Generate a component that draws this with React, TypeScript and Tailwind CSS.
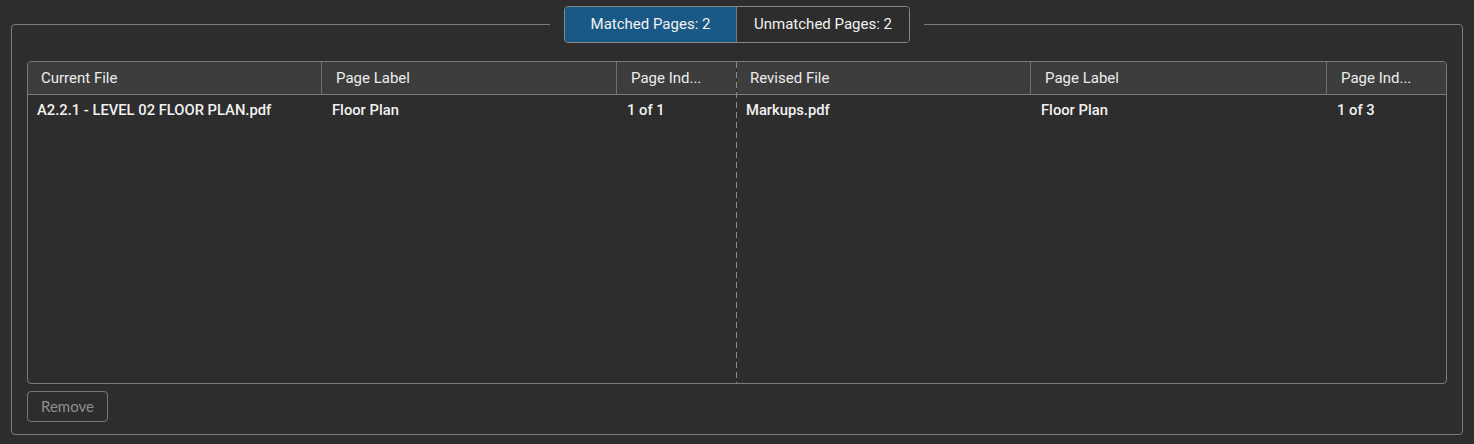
import { useState } from "react";

type Side = {
  cols: { label: string; width: string }[];
  row: string[];
};

const sides: Side[] = [
  {
    cols: [
      { label: "Current File", width: "w-[293px]" },
      { label: "Page Label", width: "w-[295px]" },
      { label: "Page Ind...", width: "flex-1" },
    ],
    row: ["A2.2.1 - LEVEL 02 FLOOR PLAN.pdf", "Floor Plan", "1 of 1"],
  },
  {
    cols: [
      { label: "Revised File", width: "w-[293px]" },
      { label: "Page Label", width: "w-[296px]" },
      { label: "Page Ind...", width: "flex-1" },
    ],
    row: ["Markups.pdf", "Floor Plan", "1 of 3"],
  },
];

function PageTable({ side, width }: { side: Side; width: string }) {
  return (
    <div className={`flex flex-col ${width} min-w-0`}>
      {/* header */}
      <div className="flex h-[33px] bg-[#3d3d3d] border-b border-[#7a7a7a]">
        {side.cols.map((c, i) => (
          <div
            key={i}
            className={`${c.width} shrink-0 flex items-center text-[15px] text-[#ececec] truncate ${
              i > 0 ? "border-l border-[#6f6f6f] pl-[14px]" : "pl-[13px]"
            }`}
          >
            {c.label}
          </div>
        ))}
      </div>
      {/* row */}
      <div className="flex h-[30px] items-center">
        {side.cols.map((c, i) => (
          <div
            key={i}
            className={`${c.width} shrink-0 ${i > 0 ? "pl-[11px]" : "pl-[9px]"} text-[14.75px] font-medium text-[#f2f2f2] truncate`}
          >
            {side.row[i]}
          </div>
        ))}
      </div>
    </div>
  );
}

export default function App() {
  const [tab, setTab] = useState<"matched" | "unmatched">("matched");

  return (
    <div
      className="w-[1474px] h-[444px] bg-[#2d2d2d] px-[11px] pt-[6px] overflow-hidden"
      style={{ fontFamily: "Roboto, 'Liberation Sans', sans-serif" }}
    >
      <fieldset className="border border-[#7c7c7c] rounded-[4px] px-[15px] pt-[18px] pb-[12px] m-0 min-w-0">
        <legend className="mx-auto px-[14px]">
          <div className="flex h-[37px] border border-[#888888] rounded-[4px] overflow-hidden text-[15px]">
            <button
              onClick={() => setTab("matched")}
              className={`w-[171px] flex items-center justify-center text-[#f2f2f2] ${
                tab === "matched" ? "bg-[#1a5986]" : "bg-[#2d2d2d]"
              }`}
            >
              Matched Pages: 2
            </button>
            <button
              onClick={() => setTab("unmatched")}
              className={`w-[173px] flex items-center justify-center border-l border-[#7a7a7a] text-[#f2f2f2] ${
                tab === "unmatched" ? "bg-[#1a5986]" : "bg-[#2d2d2d]"
              }`}
            >
              Unmatched Pages: 2
            </button>
          </div>
        </legend>

        {/* table */}
        <div className="flex h-[323px] border border-[#7a7a7a] rounded-[4px] overflow-hidden">
          <PageTable side={sides[0]} width="w-[708px] shrink-0" />
          <div className="w-px shrink-0 bg-[repeating-linear-gradient(to_bottom,#8a8a8a_0px,#8a8a8a_6px,transparent_6px,transparent_10px)]" />
          <PageTable side={sides[1]} width="flex-1" />
        </div>

        <button
          className="mt-[7px] w-[81px] h-[31px] border border-[#777777] rounded-[4px] text-[15px] text-[#8f8f8f] flex items-center justify-center"
          style={{ fontFamily: "Lato, 'Open Sans', sans-serif" }}
        >
          Remove
        </button>
      </fieldset>
    </div>
  );
}
